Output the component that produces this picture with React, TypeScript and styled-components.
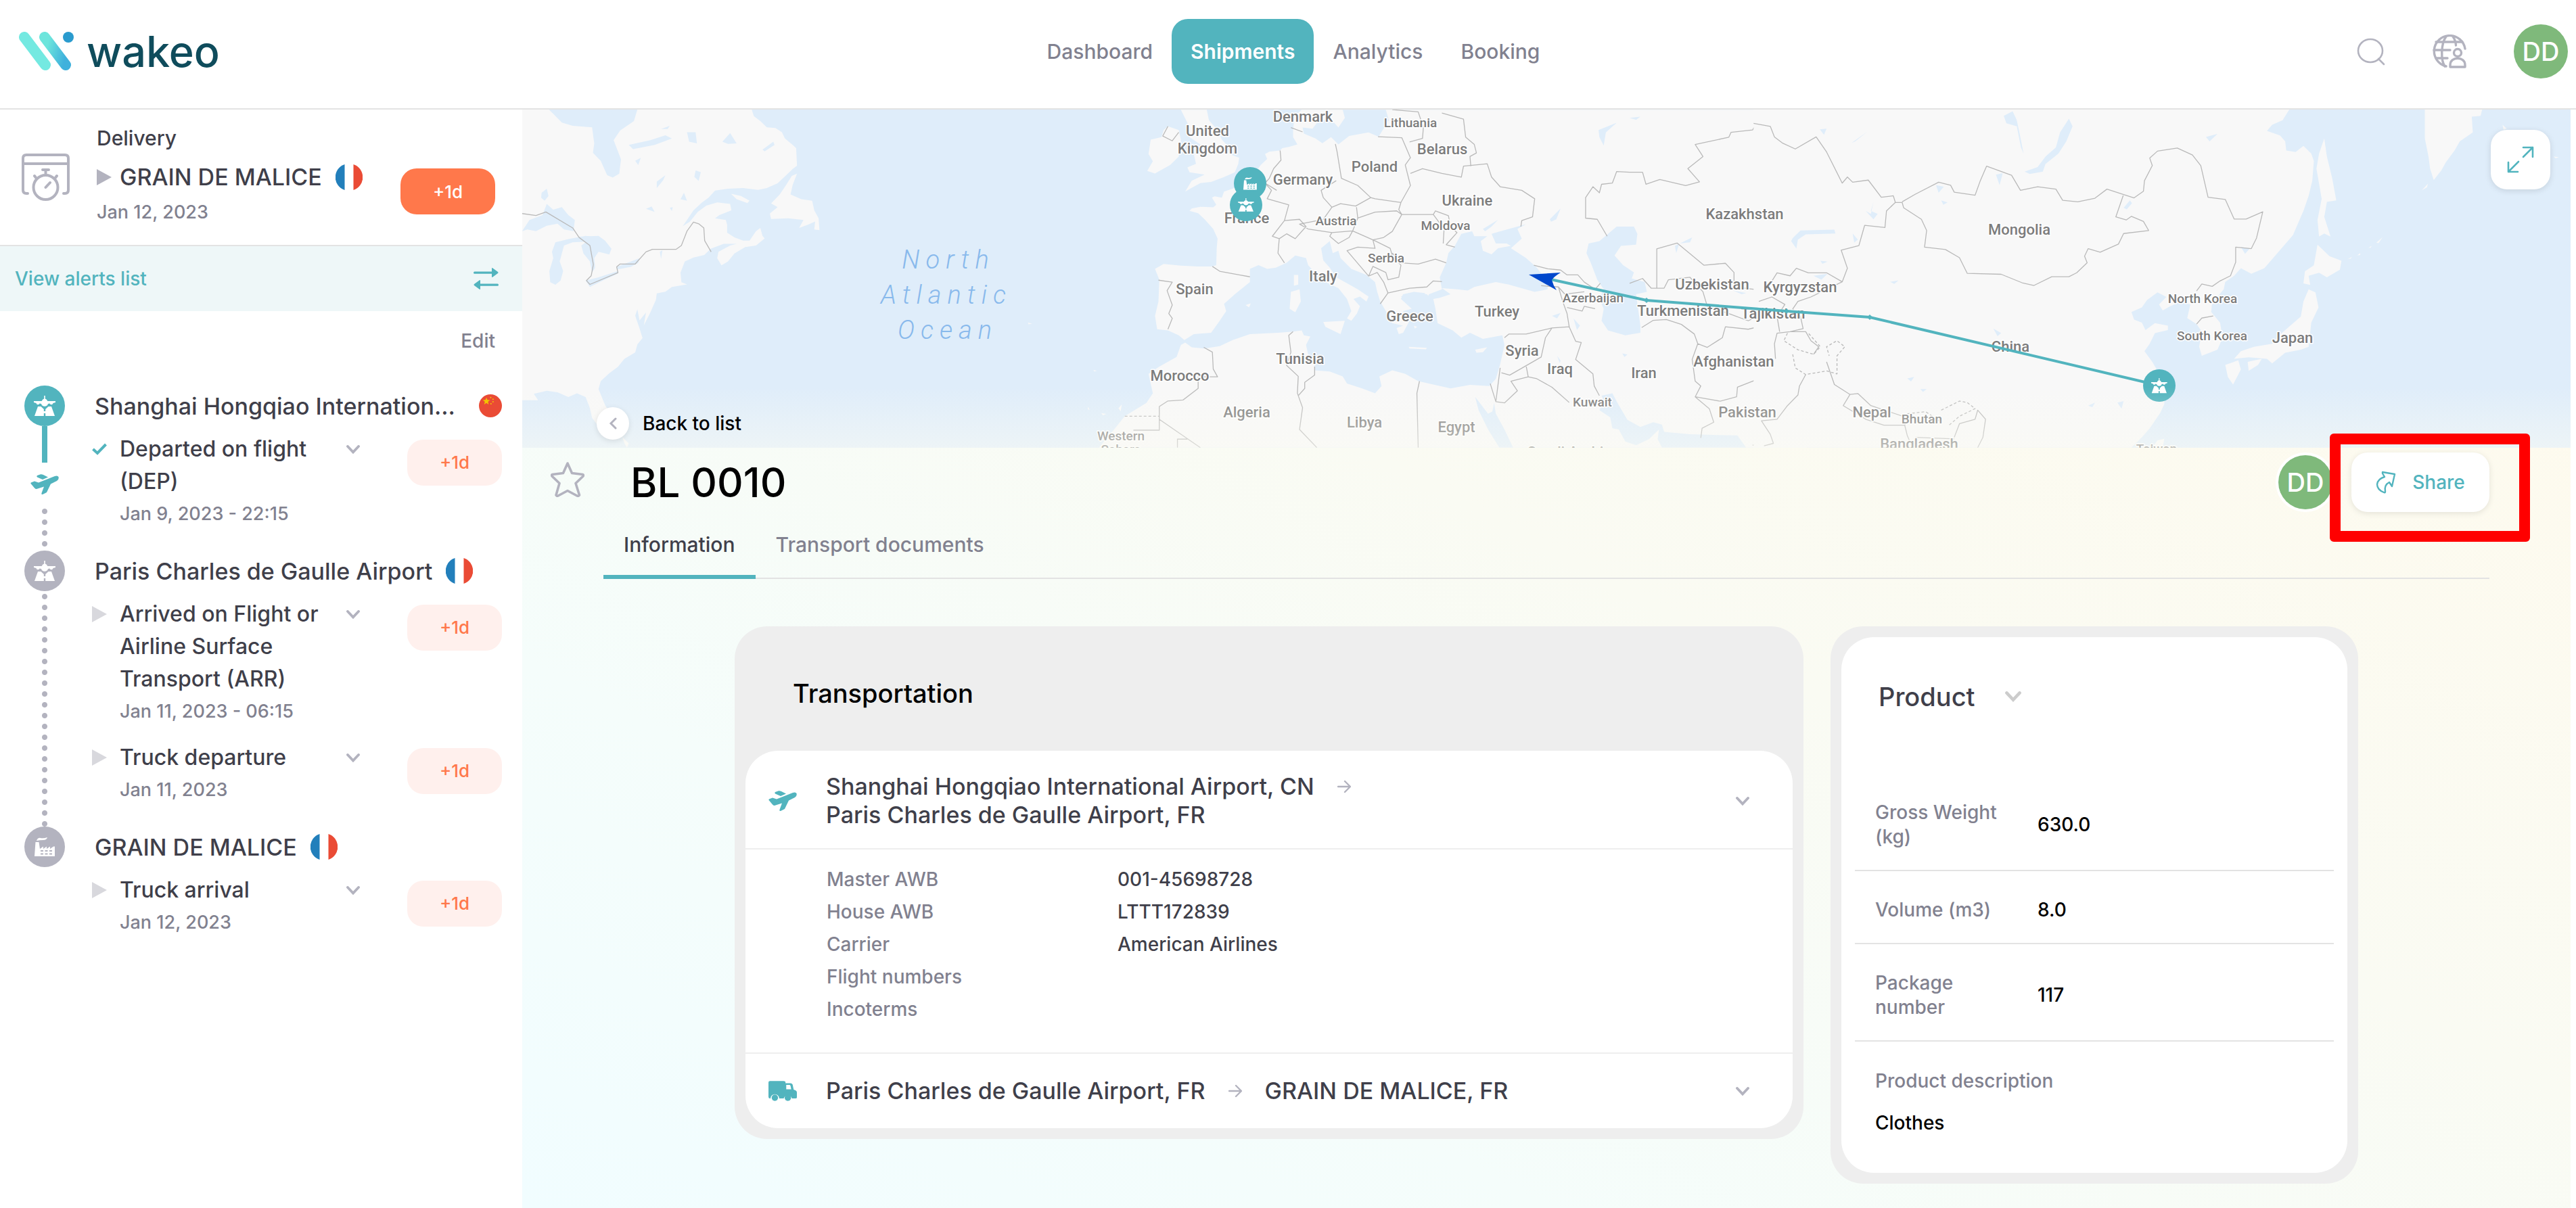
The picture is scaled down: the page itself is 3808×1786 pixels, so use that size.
import React from "react";
import styled, { createGlobalStyle, css } from "styled-components";

const teal = "#52b4be";
const ink = "#3f3f4a";
const muted = "#81818f";
const faint = "#b3b3bf";
const line = "#e3e3e3";
const orange = "#ff784b";
const font = `Inter, "Open Sans", "Liberation Sans", sans-serif`;

const GlobalStyle = createGlobalStyle`
  *, *::before, *::after { box-sizing: border-box; }
  body { margin: 0; background: #fff; color: ${ink}; font-family: ${font}; font-size: 30px; font-weight: 500; }
  button { font: inherit; color: inherit; border: 0; background: none; padding: 0; cursor: pointer; }
  a { color: inherit; text-decoration: none; }
  h1, h2, h3, p, dl, dd, dt, ol, ul { margin: 0; padding: 0; font-weight: inherit; list-style: none; }
  svg { display: block; }
`;

/* ---------- shell ---------- */

const Page = styled.div`
  min-height: 100vh;
  display: flex;
  flex-direction: column;
`;

const Header = styled.header`
  display: grid;
  grid-template-columns: 1fr auto 1fr;
  align-items: center;
  height: 162px;
  padding: 0 12px 8px 28px;
  border-bottom: 2px solid ${line};
`;

const Brand = styled.a`
  display: flex;
  align-items: center;
  gap: 18px;
  color: #0f4c5c;
  font-size: 63px;
  line-height: 64px;
`;

const Nav = styled.nav`
  display: flex;
`;

const NavLink = styled.a<{ $active?: boolean }>`
  display: flex;
  align-items: center;
  height: 96px;
  padding: 0 28px;
  border-radius: 24px;
  color: ${muted};
  ${(p) =>
    p.$active &&
    css`
      background: ${teal};
      color: #fff;
      font-weight: 600;
    `}
`;

const HeaderTools = styled.div`
  display: flex;
  justify-content: flex-end;
  align-items: center;
  gap: 70px;
`;

const Avatar = styled.span<{ $ring?: boolean }>`
  display: flex;
  flex: none;
  align-items: center;
  justify-content: center;
  width: 80px;
  height: 80px;
  border-radius: 50%;
  background: #7fb97b;
  color: #fff;
  font-size: 38px;
  box-shadow: ${(p) => (p.$ring ? "0 0 0 4px #fff" : "none")};
`;

const Body = styled.div`
  display: flex;
  flex: 1;
  padding-right: 8px;
`;

/* ---------- sidebar ---------- */

const Sidebar = styled.aside`
  flex: none;
  width: 772px;
  background: #fff;
`;

const Summary = styled.section`
  display: flex;
  align-items: center;
  height: 202px;
  padding: 0 40px 0 32px;
  border-bottom: 2px solid ${line};
`;

const SummaryText = styled.div`
  flex: 1;
  margin-left: 40px;
  padding-bottom: 12px;
  line-height: 48px;
`;

const SummaryName = styled.div`
  display: flex;
  align-items: center;
  gap: 20px;
  height: 68px;
  font-size: 34px;
`;

const SummaryPlace = styled.span`
  display: flex;
  align-items: center;
  gap: 12px;
`;

const DateText = styled.p<{ $tight?: boolean }>`
  color: ${muted};
  font-size: 27px;
  line-height: ${(p) => (p.$tight ? 36 : 48)}px;
`;

const Delay = styled.span<{ $solid?: boolean }>`
  display: flex;
  align-items: center;
  justify-content: center;
  width: 140px;
  height: 68px;
  border-radius: 24px;
  background: ${(p) => (p.$solid ? orange : "#fff0ed")};
  color: ${(p) => (p.$solid ? "#fff" : orange)};
  font-size: 26px;
`;

const SummaryDelay = styled(Delay)`
  margin-top: 42px;
`;

const Triangle = styled.span<{ $light?: boolean }>`
  flex: none;
  width: 0;
  height: 0;
  border-left: 22px solid ${(p) => (p.$light ? "#d8d8dd" : faint)};
  border-top: 12px solid transparent;
  border-bottom: 12px solid transparent;
`;

const AlertsBar = styled.button`
  display: flex;
  justify-content: space-between;
  align-items: center;
  width: 100%;
  height: 96px;
  padding: 0 35px 0 22px;
  background: #eef7f8;
  color: ${teal};
  font-size: 28px;
`;

const EditRow = styled.div`
  display: flex;
  justify-content: flex-end;
  height: 110px;
  padding: 24px 40px 0;
  color: ${muted};
  font-size: 28px;
  line-height: 40px;
`;

const EditButton = styled.button`
  height: 40px;
`;

const Stage = styled.li`
  display: grid;
  grid-template-columns: 60px minmax(0, 1fr);
  column-gap: 40px;
  padding: 0 30px 0 36px;
`;

const Rail = styled.div`
  display: flex;
  flex-direction: column;
  align-items: center;
`;

const Marker = styled.span<{ $done?: boolean }>`
  display: flex;
  flex: none;
  align-items: center;
  justify-content: center;
  width: 60px;
  height: 60px;
  border-radius: 50%;
  background: ${(p) => (p.$done ? teal : faint)};
`;

const SolidTrack = styled.span`
  width: 8px;
  height: 54px;
  background: ${teal};
`;

const RailVehicle = styled.span`
  display: flex;
  align-items: center;
  height: 64px;
`;

const DottedTrack = styled.span`
  flex: 1;
  width: 8px;
  background: radial-gradient(circle, ${faint} 3.5px, transparent 4.5px) 0 0 / 8px 16px;
`;

const StageBody = styled.div<{ $last?: boolean }>`
  padding-bottom: ${(p) => (p.$last ? 0 : 30)}px;
`;

const StageTitle = styled.h3`
  display: flex;
  align-items: center;
  gap: 20px;
  height: 60px;
  padding-left: 4px;
  font-size: 34px;
  white-space: nowrap;
`;

const StageName = styled.span<{ $truncated?: boolean }>`
  flex: none;
  min-width: ${(p) => (p.$truncated ? 548 : 0)}px;
`;

const Step = styled.div`
  display: grid;
  grid-template-columns: 22px 316px 20px 1fr;
  column-gap: 19px;
  margin-top: 10px;
  font-size: 32px;
  line-height: 48px;
  & + & {
    margin-top: 20px;
  }
`;

const StepIcon = styled.span`
  display: flex;
  align-items: center;
  height: 48px;
`;

const StepToggle = styled.button`
  display: flex;
  align-items: center;
  height: 48px;
`;

const StepDelay = styled(Delay)`
  justify-self: end;
  margin-top: 10px;
`;

/* ---------- main ---------- */

const Main = styled.main`
  display: flex;
  flex: 1;
  flex-direction: column;
  min-width: 0;
  background: linear-gradient(to top right, #f1fdff 0%, #f5fdfb 25%, #fafbf3 55%, #fffaec 100%);
`;

const MapPanel = styled.section`
  position: relative;
  height: 500px;
  overflow: hidden;
  background: #dfedfa;
`;

const MapFade = styled.div`
  position: absolute;
  inset: auto 0 0 0;
  height: 90px;
  background: linear-gradient(to bottom, rgba(251, 251, 243, 0), rgba(251, 251, 243, 0.5));
`;

const BackLink = styled.a`
  position: absolute;
  left: 110px;
  bottom: 12px;
  display: flex;
  align-items: center;
  gap: 20px;
  color: #000;
  font-size: 28px;
`;

const BackCircle = styled.span`
  display: flex;
  align-items: center;
  justify-content: center;
  width: 48px;
  height: 48px;
  border-radius: 50%;
  background: #fff;
  box-shadow: 0 2px 8px rgba(0, 0, 0, 0.1);
`;

const ExpandButton = styled.button`
  position: absolute;
  top: 30px;
  right: 30px;
  display: flex;
  align-items: center;
  justify-content: center;
  width: 88px;
  height: 88px;
  border-radius: 24px;
  background: #fff;
  box-shadow: 0 2px 10px rgba(0, 0, 0, 0.12);
`;

const TitleRow = styled.div`
  display: flex;
  align-items: center;
  height: 100px;
  padding: 2px 120px 0 42px;
`;

const FavouriteButton = styled.button`
  padding-bottom: 8px;
`;

const Title = styled.h1`
  flex: 1;
  margin-left: 68px;
  color: #000;
  font-size: 60px;
  line-height: 64px;
`;

const ShareArea = styled.div`
  position: relative;
  margin-left: 28px;
`;

const ShareButton = styled.button`
  display: flex;
  align-items: center;
  justify-content: center;
  gap: 24px;
  width: 204px;
  height: 88px;
  border-radius: 24px;
  background: #fff;
  color: ${teal};
  font-size: 28px;
  box-shadow: 0 2px 10px rgba(0, 0, 0, 0.1);
`;

const Highlight = styled.span`
  position: absolute;
  inset: -28px -60px -44px -32px;
  border: 16px solid #f00;
  border-radius: 6px;
  pointer-events: none;
`;

const Tabs = styled.nav`
  display: flex;
  margin: 0 120px;
  box-shadow: inset 0 -2px 0 ${line};
`;

const Tab = styled.a<{ $active?: boolean }>`
  height: 94px;
  padding: 23px 30px 0;
  border-bottom: 6px solid ${(p) => (p.$active ? teal : "transparent")};
  color: ${(p) => (p.$active ? ink : muted)};
  line-height: 40px;
`;

const Cards = styled.div`
  display: grid;
  grid-template-columns: 1580fr 780fr;
  gap: 40px;
  align-items: start;
  width: 100%;
  max-width: 2400px;
  margin: 70px auto 36px;
`;

const Card = styled.section`
  padding: 16px;
  border-radius: 48px;
  background: #eee;
`;

const CardTitle = styled.h2`
  height: 168px;
  padding-left: 70px;
  color: #000;
  font-size: 38px;
  line-height: 166px;
`;

const Sheet = styled.div`
  border-radius: 48px;
  background: #fff;
`;

const Leg = styled.div<{ $tall?: boolean }>`
  display: flex;
  align-items: center;
  height: ${(p) => (p.$tall ? 144 : 110)}px;
  padding: ${(p) => (p.$tall ? 4 : 0)}px 64px 0 34px;
  font-size: 34px;
  line-height: 42px;
`;

const LegRoute = styled.div`
  flex: 1;
  margin-left: 43px;
`;

const LegLine = styled.div`
  display: flex;
  align-items: center;
  gap: 34px;
`;

const Details = styled.dl`
  display: grid;
  grid-template-columns: 430px 1fr;
  padding: 20px 120px 40px;
  border-top: 2px solid #eee;
  border-bottom: 2px solid #eee;
  font-size: 28px;
  line-height: 48px;
`;

const DetailLabel = styled.dt`
  color: ${muted};
`;

const ProductSheet = styled(Sheet)`
  padding: 62px 20px 56px;
`;

const ProductToggle = styled.button`
  display: flex;
  align-items: center;
  gap: 44px;
  height: 52px;
  margin: 0 0 88px 35px;
  font-size: 38px;
`;

const ProductRow = styled.div<{ $stacked?: boolean }>`
  display: grid;
  grid-template-columns: ${(p) => (p.$stacked ? "1fr" : "200px 1fr")};
  column-gap: 40px;
  row-gap: 26px;
  align-items: center;
  padding: ${(p) => (p.$stacked ? "40px 30px 0" : "39px 30px 31px")};
  border-bottom: ${(p) => (p.$stacked ? "0" : `2px solid ${line}`)};
  font-size: 28px;
  line-height: 36px;
`;

const ProductLabel = styled.dt`
  color: ${muted};
`;

const ProductValue = styled.dd`
  color: #000;
`;

/* ---------- icons ---------- */

const Logo = () => (
  <svg width="82" height="58" viewBox="0 0 82 58" aria-hidden="true">
    <defs>
      <linearGradient id="wave" x1="0" y1="0.3" x2="1" y2="0.7">
        <stop offset="0.1" stopColor="#6de5dc" />
        <stop offset="1" stopColor="#3fb1dc" />
      </linearGradient>
    </defs>
    <path d="M8 8 L39 49" stroke="#74e9e1" strokeWidth="16" strokeLinecap="round" />
    <path d="M38 8 L69 49" stroke="url(#wave)" strokeWidth="16" strokeLinecap="round" />
    <circle cx="73" cy="8" r="8" fill="#2a9bce" />
  </svg>
);

const SearchIcon = () => (
  <svg width="42" height="42" viewBox="0 0 42 42" fill="none" stroke={faint} strokeWidth="2.6" strokeLinecap="round">
    <ellipse cx="20" cy="20" rx="18" ry="17" />
    <path d="M32 32 L40 40" />
  </svg>
);

const GlobeUserIcon = () => (
  <svg width="50" height="50" viewBox="0 0 50 50" fill="none" stroke={faint} strokeWidth="3.4" strokeLinecap="round" strokeLinejoin="round">
    <path d="M20 47 A23 23 0 1 1 48 21" />
    <path d="M18 47 C12 38 12 14 20 3 M30 3 C33 7 34 10 34.500 16 M5 11 H44 M2 23 H26 M5 35 H22" />
    <circle cx="37" cy="27" r="5.500" />
    <path d="M26 48 V45 C26 32 48 32 48 45 V48 Z" />
  </svg>
);

const ParcelTimerIcon = () => (
  <svg width="71" height="70" viewBox="0 0 71 70" fill="none" stroke={faint} strokeWidth="4" strokeLinecap="round">
    <path d="M9 59 H7 Q2 59 2 54 V7 Q2 2 7 2 H64 Q69 2 69 7 V54 Q69 59 64 59 H62 M2 15 H69" />
    <circle cx="35.500" cy="50" r="18" />
    <path d="M35.500 31 V24 M31 24 H40 M19 33 L22 37 M52 33 L49 37 M35.500 50 L42 43" />
  </svg>
);

const SwapIcon = () => (
  <svg width="37" height="32" viewBox="0 0 37 32" fill={teal}>
    <path d="M1.500 5.500 H27 V1 Q27 -0.500 28.500 0.500 L36 6 Q37 7 36 8 L28.500 13.500 Q27 14.500 27 13 V8.800 H1.500 Q0 8.800 0 7.200 Q0 5.500 1.500 5.500Z" />
    <path d="M35.500 23.500 H10 V19 Q10 17.500 8.500 18.500 L1 24 Q0 25 1 26 L8.500 31.500 Q10 32.500 10 31 V26.800 H35.500 Q37 26.800 37 25.200 Q37 23.500 35.500 23.500Z" />
  </svg>
);

const Chevron = ({ size = 20, color = faint }: { size?: number; color?: string }) => (
  <svg width={size} height={size * 0.65} viewBox="0 0 20 13" fill="none" stroke={color} strokeWidth="3.800" strokeLinecap="round">
    <path d="M2 2 L10 10.500 L18 2" />
  </svg>
);

const Check = () => (
  <svg width="22" height="18" viewBox="0 0 22 18" fill="none" stroke={teal} strokeWidth="4">
    <path d="M1.500 9 L8 15 L20.500 2" />
  </svg>
);

const LegArrow = () => (
  <svg width="20" height="20" viewBox="0 0 20 20" fill="none" stroke={faint} strokeWidth="2.400" strokeLinecap="round" strokeLinejoin="round">
    <path d="M1 10 H19 M11 2 L19 10 L11 18" />
  </svg>
);

const airportShape = (
  <>
    <path d="M15.200 0 h1.600 v4.500 a6 6 0 0 1 3.500 3.500 H32 v2 l-3.500 1 a2.600 2.600 0 0 1 -5 0.600 l-2.500 .4 a5.200 5.200 0 0 1 -10 0 l-2.500 -.4 a2.600 2.600 0 0 1 -5 -.6 L0 10 V8 h11.700 a6 6 0 0 1 3.500 -3.500z" />
    <path d="M6 16 h4.500 l4.300 4 v3 h2.400 v-3 l4.300 -4 H26 L31 30 H17.200 v-4 h-2.400 v4 H1z" />
  </>
);

const factoryShape = (
  <>
    <path d="M3 5 Q5 0 9 1 T19 0 Q18 4 13 4 T3 5z" />
    <path fillRule="evenodd" d="M1.500 7 h5 L8 17 l5 -3.500 v3.500 l5 -3.500 v3.500 l5 -3.500 v3.500 l5 -3.500 H30 V28 H0z M9 19 h4 v2 h-4z M15.500 19 h4 v2 h-4z M22 19 h4 v2 h-4z M9 23.500 h4 v2 h-4z M15.500 23.500 h4 v2 h-4z M22 23.500 h4 v2 h-4z" />
  </>
);

const AirportIcon = () => (
  <svg width="32" height="30" viewBox="0 0 32 30" fill="#fff">{airportShape}</svg>
);

const FactoryIcon = () => (
  <svg width="30" height="28" viewBox="0 0 30 28" fill="#fff">{factoryShape}</svg>
);

const PlaneIcon = () => (
  <svg width="42" height="30" viewBox="0 0 42 30" fill={teal}>
    <path d="M0.500 14 Q0 12.500 2 12 L6 10.500 L12 12.500 L36 3 Q40 1.500 41.500 4 Q42.500 8 39 10 L30 14.500 L24 27 L18 30 Q16 30.500 16.500 28 L20 18.500 L9 22 Q7.500 22 6 20.500z" />
    <path d="M10 2 L15 0.300 Q17 0 19 1 L26 4.500 L18 8 L10 4.500 Q8.500 3 10 2z" />
  </svg>
);

const TruckIcon = () => (
  <svg width="42" height="30" viewBox="0 0 40 28" fill={teal}>
    <path fillRule="evenodd" d="M2 0 H21 Q24 0 24 2 V3 H31 Q33 3 34 5 L35.500 12 L38 13 Q40 14 40 16 V23 Q40 24.500 38 24.500 H33 A6 6 0 0 0 21.500 24.500 H15 A6 6 0 0 0 3 24.500 H2 Q0 24.500 0 22 V2 Q0 0 2 0z M25 5.500 V11.500 H32 L31 6.500 Q30.500 5.500 29.500 5.500z" />
    <circle cx="9" cy="23.500" r="4.500" />
    <circle cx="27.300" cy="23.500" r="4.500" />
  </svg>
);

const StarIcon = () => (
  <svg width="50" height="52" viewBox="0 0 50 52" fill="none" stroke={faint} strokeWidth="3.600" strokeLinejoin="round">
    <path d="M25 2 L31.500 16.500 L47.500 18.500 Q49 19.500 48 21 L37 31.500 L42.500 49 Q41 51 39 50 L25 42.500 L11 50 Q9 51 8 49 L13 31.500 L2 21 Q1 19 2.500 18.500 L18.500 16.500Z" />
  </svg>
);

const BackIcon = () => (
  <svg width="12" height="18" viewBox="0 0 12 18" fill="none" stroke={faint} strokeWidth="3" strokeLinecap="round">
    <path d="M10 2 L3 9 L10 16" />
  </svg>
);

const ExpandIcon = () => (
  <svg width="40" height="40" viewBox="0 0 40 40" fill="none" stroke={teal} strokeWidth="2.600" strokeLinecap="round" strokeLinejoin="round">
    <path d="M24 2 H38 V16 M38 2 L24 16 M2 24 V38 H16 M2 38 L17 23" />
  </svg>
);

const ShareIcon = () => (
  <svg width="30" height="34" viewBox="0 0 30 34" fill="none" stroke={teal} strokeWidth="2.400" strokeLinejoin="round">
    <path d="M10 2 L28 5 L24 23 L20 17 Q12 21 14 31 Q14 33 12 32 Q2 28 2 20 Q3 12 13 9 L10 4z" />
  </svg>
);

const Flag = ({ country }: { country: "fr" | "cn" }) => (
  <svg width="40" height="40" viewBox="0 0 40 40" role="img" aria-label={country === "fr" ? "France" : "China"}>
    {country === "fr" ? (
      <>
        <path d="M13.500 1 A20 20 0 0 0 13.500 39z" fill="#227fbb" />
        <path d="M26.500 1 A20 20 0 0 1 26.500 39z" fill="#ea4b35" />
      </>
    ) : (
      <>
        <circle cx="20" cy="20" r="20" fill="#ea4b35" />
        <path d="M13 5.500 l1.700 4.300 4.600 .3 -3.600 2.900 1.200 4.500 -3.900 -2.500 -3.900 2.500 1.200 -4.500 -3.600 -2.900 4.600 -.3z" fill="#f2c500" />
        <g fill="#f2c500">
          <circle cx="20.500" cy="5.500" r="1.200" />
          <circle cx="24.500" cy="8.500" r="1.200" />
          <circle cx="24.500" cy="13" r="1.200" />
          <circle cx="21" cy="16.500" r="1.200" />
        </g>
      </>
    )}
  </svg>
);

/* ---------- map ---------- */

const MapSvg = styled.svg`
  width: 100%;
  height: 100%;
  .land { fill: #f8f8f8; }
  .lake { fill: #dfedfa; }
  .border { fill: none; stroke: #b9b9b9; stroke-width: 1.3; vector-effect: non-scaling-stroke; stroke-linejoin: round; }
  .dashed { stroke-dasharray: 4 3; }
`;

const MapLabel = styled.text<{ $small?: boolean }>`
  font-family: Roboto, "Liberation Sans", sans-serif;
  font-size: ${(p) => (p.$small ? 19 : 22)}px;
  font-weight: 500;
  fill: #7c7c7c;
  stroke: #fff;
  stroke-width: 3px;
  stroke-linejoin: round;
  paint-order: stroke;
  text-anchor: middle;
  dominant-baseline: central;
`;

const OceanLabel = styled.text`
  font-family: Roboto, "Liberation Sans", sans-serif;
  font-size: 38px;
  font-style: italic;
  font-weight: 300;
  letter-spacing: 9px;
  fill: #88b9ec;
  text-anchor: middle;
  dominant-baseline: central;
`;

type Place = [string, number, number];

const places: Place[] = [
  ["Denmark", 1926, 172], ["United", 1785, 193], ["Kingdom", 1785, 219], ["Belarus", 2132, 220],
  ["Poland", 2032, 246], ["Germany", 1926, 265], ["Ukraine", 2169, 296], ["France", 1843, 322],
  ["Italy", 1956, 408], ["Spain", 1766, 427], ["Greece", 2084, 467], ["Turkey", 2213, 460],
  ["Turkmenistan", 2488, 459], ["Uzbekistan", 2531, 420], ["Kazakhstan", 2579, 316], ["Syria", 2250, 518],
  ["Iraq", 2306, 545], ["Iran", 2430, 551], ["Afghanistan", 2563, 534], ["Tunisia", 1922, 530],
  ["Morocco", 1744, 555], ["Algeria", 1843, 609], ["Libya", 2017, 624], ["Egypt", 2153, 631],
  ["Pakistan", 2583, 609], ["Saudi Arabia", 2320, 668], ["Kyrgyzstan", 2661, 424], ["Tajikistan", 2621, 463],
  ["Mongolia", 2985, 339], ["China", 2972, 512], ["Japan", 3389, 499], ["Nepal", 2767, 609],
  ["Bangladesh", 2837, 656],
];

const smallPlaces: Place[] = [
  ["Lithuania", 2085, 181], ["Austria", 1975, 326], ["Moldova", 2137, 333], ["Serbia", 2049, 381],
  ["Azerbaijan", 2355, 440], ["Kuwait", 2354, 594], ["Western", 1657, 644], ["Sahara", 1657, 664],
  ["North Korea", 3256, 441], ["South Korea", 3270, 496], ["Bhutan", 2841, 619], ["Taiwan", 3188, 663],
];

const americaLand =
  "M3 4 L65 4 95 45 120 55 165 60 170 110 167 140 185 165 200 210 213 217 228 205 232 160 215 100 230 70 262 40 270 4 535 4 540 25 555 40 570 60 590 62 605 75 612 95 630 115 638 125 640 180 630 190 615 210 595 235 570 250 550 256 515 250 480 252 450 258 435 280 420 295 400 320 385 350 375 370 392 355 410 325 430 305 455 295 485 300 488 320 460 335 450 345 475 350 478 365 478 390 495 405 515 415 530 415 545 385 555 375 560 400 565 408 545 430 520 435 495 455 480 480 465 492 455 470 458 450 485 430 500 425 470 425 440 440 425 460 400 468 380 480 370 515 372 545 385 552 350 560 335 575 315 580 313 600 300 640 285 680 290 640 275 665 270 630 265 650 275 690 282 720 270 740 265 765 240 785 225 810 205 830 185 855 180 880 195 930 215 975 210 1010 190 1015 165 970 160 940 150 905 130 893 110 905 85 890 60 885 30 895 40 915 3 915Z M640 205 L630 240 625 270 650 285 675 290 680 320 690 345 692 382 680 380 682 355 665 365 645 375 655 350 620 345 580 347 577 330 595 310 580 298 600 270 615 240 628 212Z M487 268 L510 275 530 290 525 297 500 285Z M235 1030 L250 1050 246 1063 240 1050Z M1175 672 l10 3 -8 2z M1327 820 l8 3 -6 2z M1345 955 l12 3 -8 4z M1385 940 l8 -12 -3 22z M1315 935 l3 10 -4 -2z";

const americaLakes =
  "M3 385 L20 350 50 335 60 300 75 318 95 310 110 335 125 350 122 385 100 380 85 362 60 368 35 385 15 380Z M80 420 L110 410 150 400 180 405 150 418 120 420 100 430 95 455 90 480 98 510 92 540 80 553 68 545 66 510 75 470 72 450Z M135 402 L180 400 195 415 210 440 205 458 180 450 170 470 172 500 165 515 160 480 145 455 140 430 150 420 130 410Z M150 540 L180 530 225 510 225 518 190 540 160 560Z M222 497 L240 488 275 470 272 485 255 497 225 505Z M250 115 L300 100 335 85 350 95 310 115 260 128Z M385 75 L405 75 408 110 390 105Z M467 105 L485 78 500 110 480 112Z M560 130 L585 105 588 115 565 135Z M405 195 L417 200 412 228 402 215Z M315 230 L335 210 330 225 315 250Z M48 265 L60 252 64 275 55 290 47 280Z M370 285 L378 265 385 290Z M290 315 L303 308 310 325Z M265 165 L278 155 272 178Z M325 65 L345 55 340 65Z M322 450 L328 445 325 472Z M345 312 L352 310 350 322Z M208 8 L222 4 216 25Z";

const americaBorders =
  "M3 330 L35 336 58 325 120 375 135 405 160 430 168 490 163 525 152 540 160 552 225 515 222 497 230 488 265 488 290 450 305 442 360 442 372 430 385 385 400 357 412 362 424 375 426 415 441 450";

const europeLand =
  "M430 6 L415 30 412 60 410 90 410 120 420 150 400 160 385 165 380 175 355 180 345 190 350 210 335 235 325 260 305 280 285 300 275 330 250 345 245 370 228 365 222 370 232 400 225 410 195 408 175 415 170 425 190 435 205 460 225 500 235 540 233 580 232 650 223 655 190 655 150 652 110 645 90 665 100 710 98 800 90 860 95 915 120 920 145 940 158 960 180 935 220 930 240 880 255 840 250 810 275 770 310 720 310 665 330 650 350 665 370 660 395 640 415 610 440 620 445 650 460 680 485 720 515 745 535 790 545 840 535 870 545 880 558 850 565 820 550 790 565 780 580 800 585 780 560 750 530 720 510 700 495 660 480 630 475 580 495 550 502 600 515 590 520 620 545 665 580 690 600 720 605 760 612 800 625 840 640 890 665 900 650 910 655 935 665 930 680 880 665 840 685 830 660 790 665 770 690 760 715 765 720 790 725 770 755 750 750 700 765 640 770 600 785 570 800 520 825 510 830 530 860 530 845 550 850 590 870 605 885 580 915 570 905 560 880 560 870 520 890 510 950 480 930 500 940 540 915 580 950 620 975 660 1000 720 1000 750 970 760 910 730 880 720 830 740 815 755 790 750 755 745 775 770 750 785 735 790 740 830 745 890 780 920 800 950 820 930 850 955 895 940 900 980 890 1060 880 1120 865 1150 820 1145 775 1160 700 1130 670 1100 640 1085 610 1110 615 1150 600 1180 570 1160 535 1140 525 1110 495 1090 460 1085 460 1060 445 1020 440 980 450 945 435 940 430 920 410 925 375 930 310 935 270 960 240 985 205 995 175 990 160 970 150 980 140 1030 100 1070 75 1100 85 1180 70 1220 20 1275 0 1320 -40 1405 1600 1405 1600 6Z M150 6 L210 6 215 50 235 90 245 130 255 150 262 190 285 205 283 230 275 265 250 285 220 305 195 310 175 330 160 345 175 300 205 275 170 265 165 245 185 230 180 190 200 190 195 150 170 120 165 60Z M120 75 L145 90 150 130 145 200 125 235 90 270 72 260 85 220 75 190 80 130 105 120 110 90Z M405 760 L425 750 428 800 415 845 402 830Z M412 690 L422 690 422 730 412 735Z M480 885 L530 880 520 935 485 905Z M678 988 L720 992 718 998 680 995Z M832 1000 L860 990 850 1010 835 1012Z M300 815 L312 808 308 825Z M690 900 L698 905 692 912Z";

const europeWater =
  "M525 6 L625 6 632 50 608 118 585 100 540 115 515 150 498 120 478 145 462 125 435 105 432 80 455 85 470 50 500 50 515 80 530 40Z M1140 520 L1160 490 1200 490 1208 520 1205 565 1170 570 1155 610 1175 650 1200 680 1195 705 1225 720 1230 760 1205 770 1215 900 1215 930 1180 940 1140 920 1125 880 1130 830 1120 790 1130 750 1115 710 1100 640 1090 600 1095 560 1120 550Z M832 1195 L862 1265 872 1255 876 1220 880 1265 900 1330 920 1405 888 1405 862 1330 840 1250Z M1125 1190 L1150 1180 1165 1230 1185 1290 1215 1320 1245 1300 1265 1310 1270 1340 1330 1350 1440 1355 1460 1405 1265 1405 1255 1370 1258 1330 1235 1370 1205 1395 1180 1380 1165 1330 1150 1325 1145 1280 1120 1250 1130 1210Z M1118 90 L1160 60 1135 100 1130 155 1120 120Z M1295 570 L1335 535 1330 555 1305 560 1298 600Z M1005 460 L1030 415 1020 460 1008 470Z M1190 40 L1215 35 1205 48Z M1480 325 L1490 312 1488 340Z M1060 870 L1075 900 1068 918Z M1010 860 L1030 848 1022 870Z M850 500 L885 462 870 490 855 510Z M1430 755 L1460 765 1450 770Z M1173 1015 L1185 1020 1178 1030Z M1022 1025 L1030 1045 1028 1055Z M660 780 L680 765 720 770 730 790 700 800 712 830 690 820Z";

const europeBorders =
  "M223 655 L240 675 285 690 310 698 M98 712 L130 720 118 755 130 815 122 850 130 870 120 915 M345 310 L360 340 350 375 400 400 390 465 362 530 378 540 375 600 390 640 M390 465 L425 460 440 490 415 540 395 520 378 540 M380 175 L382 215 365 250 355 290 345 310 372 340 M508 148 L512 180 522 290 560 320 590 370 M607 118 L662 122 682 205 670 235 682 320 660 390 600 375 590 370 555 405 520 395 500 410 480 370 475 340 510 300 M500 410 L480 460 425 480 445 500 500 515 548 508 560 455 557 410 M560 455 L600 430 650 425 662 440 640 510 620 535 595 545 548 508 M660 390 L655 420 662 440 735 440 740 425 770 445 775 490 790 515 765 565 785 575 M735 440 L760 500 758 560 M640 600 L660 640 700 645 740 625 765 640 M595 545 L635 580 640 610 660 650 655 700 630 710 625 680 595 655 585 695 535 590 560 575 600 580 595 545 M500 515 L495 530 515 560 540 535 548 508 M612 810 L630 765 680 745 720 740 735 715 755 718 M585 695 L605 680 620 720 630 765 M682 270 L710 250 755 270 800 285 805 240 860 230 870 285 890 325 940 340 970 375 965 450 940 465 938 490 M640 6 L700 15 712 80 710 125 680 140 M755 20 L805 45 810 120 830 150 835 185 820 200 822 240 M405 80 L432 98 M1138 530 L1115 460 1088 455 1088 370 1105 325 1120 350 1125 315 1150 310 1160 262 1190 265 1220 265 1228 315 1260 295 1320 320 1352 305 1325 250 1360 200 1342 150 1420 120 1425 100 1475 90 1485 62 1525 80 1530 130 1568 140 M1253 745 L1253 582 1300 558 1362 650 1412 642 1432 680 1432 740 1480 750 1495 720 1568 680 M1190 725 L1220 705 1240 745 1270 745 1280 710 1330 700 1360 760 1370 820 1420 850 1465 880 1500 850 M968 650 L1000 665 1030 670 1045 690 1070 690 1085 720 1110 750 1122 725 M985 735 L1025 740 1040 770 1085 760 M1025 740 L1035 800 1045 850 1050 905 1010 910 950 935 910 935 900 950 M1045 825 L1080 840 1085 820 1110 830 M1050 905 L1065 965 1078 970 1065 1040 1105 1100 1108 1150 1120 1190 M1010 910 L995 950 985 1030 912 1105 893 1095 M950 1065 L955 1112 915 1130 930 1170 900 1220 880 1215 867 1140 M880 1215 L890 1075 M955 1112 L975 1120 1010 1155 1050 1218 M1218 908 L1245 878 1275 875 1310 895 1340 935 1348 975 1335 1040 1342 1130 1355 1150 1342 1195 1400 1213 1438 1195 1440 1155 1490 1120 1500 1060 1530 1000 1525 950 1545 930 M1348 975 L1370 990 1405 950 1412 905 1465 915 1500 900 1530 880 M1342 1195 L1375 1245 1385 1300 1358 1325 1355 1365 M1568 1200 L1545 1260 1520 1300 1523 1390 1475 1395 M703 1130 L697 1180 700 1405 M410 925 L400 940 405 1010 395 1065 422 1110 420 1180 432 1240 425 1330 465 1405 M460 1070 L460 1105 437 1135 437 1160 422 1190 M203 990 L223 1010 225 1080 235 1112 190 1112 190 1160 155 1208 120 1212 100 1235 100 1333 40 1333 M100 1288 L195 1405 M142 1405 L142 1370 165 1370 M120 75 L108 115 130 135 145 100";

const asiaLand =
  "M-10 4 L1018 4 1005 40 985 55 975 75 1000 90 1010 110 1012 140 1030 145 1045 125 1060 150 1065 175 1062 240 1055 290 1045 340 1025 420 990 490 970 530 945 548 925 530 912 555 895 575 892 600 880 625 870 640 868 675 885 710 890 760 880 800 850 820 845 790 850 740 840 715 822 695 828 650 810 640 790 655 775 670 768 650 782 625 765 610 745 635 735 660 715 675 720 700 735 710 742 735 760 712 785 720 785 735 760 745 750 780 740 805 755 840 765 870 780 905 778 980 770 1010 750 1060 735 1090 715 1124 -10 1124Z M1278 4 L1388 4 1385 25 1368 28 1370 80 1345 110 1335 140 1318 180 1310 205 1295 238 1288 200 1285 160 1278 100Z M1085 100 L1090 160 1100 230 1108 305 1090 310 1085 360 1097 425 1085 415 1075 425 1072 370 1080 300 1075 250 1070 200 1075 150Z M1072 452 L1095 490 1118 505 1115 535 1090 560 1075 545 1055 555 1058 585 1045 580 1048 540 1065 520Z M1055 600 L1068 610 1074 660 1060 710 1055 790 1040 800 1010 810 985 845 975 830 940 825 912 830 925 805 950 790 985 780 1000 750 1040 690 1045 640Z M938 840 L965 830 958 850 940 870Z M895 850 L920 835 925 865 910 915 900 890Z M765 1100 L778 1095 775 1124 755 1124Z M1130 500 l8 -8 -2 6z M1148 488 l6 -8 0 6z M1185 445 l12 -18 -8 20z M1170 462 l6 -6 -2 6z M1272 272 l12 -22 -2 12z M1427 55 l8 12 -6 4z M1525 160 l10 2 -6 4z";

const asiaLakes =
  "M595 35 L602 60 590 110 575 150 550 185 545 210 520 218 510 210 535 195 550 160 570 130 578 80Z M487 10 L495 40 500 80 508 150 503 130 495 60 475 50 470 25Z M65 430 L80 405 145 402 147 415 90 418 75 435 72 465 62 440Z M858 95 L880 85 865 110Z M455 220 L468 215 462 255Z M340 255 L355 260 345 280Z M205 340 L215 350 220 310 215 340 228 350 220 368Z M105 555 L132 548 120 568Z M117 70 L130 68 125 88Z M178 115 L208 78 185 110Z M450 730 L465 745 458 755Z M700 330 L712 305 716 315 706 335Z M180 415 L190 435 183 445Z M925 460 L942 465 933 482Z M252 575 L268 570 260 582Z M285 895 L298 890 292 905Z M688 975 L700 970 696 995Z M118 505 L132 508 122 515Z M310 930 L322 930 315 940Z M350 305 L362 312 354 320Z M632 985 L645 975 640 990Z";

const asiaBorders =
  "M-10 50 L22 60 30 95 45 115 70 135 110 95 130 145 160 248 170 228 180 245 210 238 235 295 258 290 262 312 275 312 M275 310 L300 285 345 245 368 255 375 278 415 288 425 240 437 192 485 222 502 272 535 260 570 268 583 305 612 310 645 298 668 268 720 297 738 275 740 240 755 190 750 165 765 142 803 132 832 155 848 190 862 295 895 302 912 367 935 367 967 343 955 430 945 465 915 460 915 510 905 555 885 572 870 590 850 582 840 605 M275 312 L278 330 312 368 322 405 318 460 358 468 385 495 400 547 465 550 505 578 528 587 562 558 595 558 610 545 630 512 625 490 632 465 655 477 690 450 700 415 748 405 738 375 715 358 705 370 685 360 700 285 M262 312 L245 340 242 395 203 388 192 455 158 470 170 530 160 575 130 545 95 545 72 530 60 555 35 545 15 600 M160 575 L130 600 100 625 75 640 65 665 80 690 85 730 60 740 35 745 30 780 32 830 M0 640 L25 625 50 650 35 690 40 740 M60 740 L90 740 100 770 115 790 105 815 M90 882 L78 920 75 950 55 985 35 1030 5 1035 22 1080 28 1110 10 1118 M130 840 L145 915 175 948 162 985 205 1030 240 1050 280 1050 285 1025 262 1012 215 985 190 945 175 948 M280 1050 L285 1085 295 1124 M375 1090 L385 1045 415 1030 420 1000 435 1030 430 1090 420 1124 M300 1090 L375 1095 M840 715 L850 695 872 688";

const asiaDisputed =
  "M55 745 L48 770 75 800 105 815 118 790 95 745 M65 815 L70 860 90 882 130 870 150 880 150 820 165 790 150 770 130 790 135 820 M350 1000 L385 970 400 975 415 995 385 1020 365 1050 M285 1012 L320 1005 350 1040";

const WorldMap = () => (
  <MapSvg viewBox="772 162 3028 500" preserveAspectRatio="xMidYMid slice" role="img" aria-label="Shipment route map">
    <g transform="translate(770 160) scale(0.6378 0.4719)">
      <path className="land" d={americaLand} />
      <path className="lake" d={americaLakes} />
      <path className="border" d={americaBorders} />
    </g>
    <g transform="translate(1650 160) scale(0.6378 0.3571)">
      <path className="land" d={europeLand} />
      <path className="lake" d={europeWater} />
      <path className="border" d={europeBorders} />
      <path className="border dashed" d="M20 1275 H100" />
    </g>
    <g transform="translate(2600 160) scale(0.7704 0.4464)">
      <path className="land" d={asiaLand} />
      <path className="lake" d={asiaLakes} />
      <path className="border" d={asiaBorders} />
      <path className="border dashed" d={asiaDisputed} />
    </g>

    <OceanLabel x="1402" y="384">North</OceanLabel>
    <OceanLabel x="1399" y="436">Atlantic</OceanLabel>
    <OceanLabel x="1401" y="488">Ocean</OceanLabel>
    {places.map(([name, x, y]) => (
      <MapLabel key={name} x={x} y={y}>{name}</MapLabel>
    ))}
    {smallPlaces.map(([name, x, y]) => (
      <MapLabel key={name} x={x} y={y} $small>{name}</MapLabel>
    ))}

    <path d="M2292 413 L2434 444 L2641 460 L2764 469 L3192 570" fill="none" stroke={teal} strokeWidth="4" />
    <g fill={teal}>
      <path d="M2434 440 l4 4 -4 4 -4 -4z M2641 456 l4 4 -4 4 -4 -4z M2764 465 l4 4 -4 4 -4 -4z" />
      <circle cx="1848" cy="271" r="24" />
      <circle cx="1842" cy="303" r="24" />
      <circle cx="3192" cy="570" r="24" />
    </g>
    <path d="M2260 406 L2307 403 Q2297 409 2294 414 Q2296 422 2301 429z" fill="#0047cc" />
    <g fill="#fff">
      <g transform="translate(1838 262) scale(0.66)">{factoryShape}</g>
      <g transform="translate(1830 293) scale(0.74 0.66)">{airportShape}</g>
      <g transform="translate(3180 559) scale(0.74)">{airportShape}</g>
    </g>
  </MapSvg>
);

/* ---------- data ---------- */

type StepData = { label: string; date: string; done?: boolean };
type StageData = { name: string; flag: "fr" | "cn"; place: "airport" | "factory"; current?: boolean; truncated?: boolean; steps: StepData[] };

const stages: StageData[] = [
  {
    name: "Shanghai Hongqiao Internation...",
    flag: "cn",
    place: "airport",
    current: true,
    truncated: true,
    steps: [{ label: "Departed on flight (DEP)", date: "Jan 9, 2023 - 22:15", done: true }],
  },
  {
    name: "Paris Charles de Gaulle Airport",
    flag: "fr",
    place: "airport",
    steps: [
      { label: "Arrived on Flight or Airline Surface Transport (ARR)", date: "Jan 11, 2023 - 06:15" },
      { label: "Truck departure", date: "Jan 11, 2023" },
    ],
  },
  {
    name: "GRAIN DE MALICE",
    flag: "fr",
    place: "factory",
    steps: [{ label: "Truck arrival", date: "Jan 12, 2023" }],
  },
];

const waybill: [string, string][] = [
  ["Master AWB", "001-45698728"],
  ["House AWB", "LTTT172839"],
  ["Carrier", "American Airlines"],
  ["Flight numbers", "\u00a0"],
  ["Incoterms", "\u00a0"],
];

const product: [string, string][] = [
  ["Gross Weight (kg)", "630.0"],
  ["Volume (m3)", "8.0"],
  ["Package number", "117"],
];

/* ---------- page ---------- */

export default function App() {
  return (
    <Page>
      <GlobalStyle />
      <Header>
        <Brand href="#home">
          <Logo />
          wakeo
        </Brand>
        <Nav>
          <NavLink href="#dashboard">Dashboard</NavLink>
          <NavLink href="#shipments" $active>Shipments</NavLink>
          <NavLink href="#analytics">Analytics</NavLink>
          <NavLink href="#booking">Booking</NavLink>
        </Nav>
        <HeaderTools>
          <button type="button" aria-label="Search"><SearchIcon /></button>
          <button type="button" aria-label="Language"><GlobeUserIcon /></button>
          <Avatar>DD</Avatar>
        </HeaderTools>
      </Header>

      <Body>
        <Sidebar>
          <Summary>
            <ParcelTimerIcon />
            <SummaryText>
              <p>Delivery</p>
              <SummaryName>
                <SummaryPlace>
                  <Triangle />
                  GRAIN DE MALICE
                </SummaryPlace>
                <Flag country="fr" />
              </SummaryName>
              <DateText $tight>Jan 12, 2023</DateText>
            </SummaryText>
            <SummaryDelay $solid>+1d</SummaryDelay>
          </Summary>
          <AlertsBar type="button">
            View alerts list
            <SwapIcon />
          </AlertsBar>
          <EditRow>
            <EditButton type="button">Edit</EditButton>
          </EditRow>
          <ol>
            {stages.map((stage, i) => (
              <Stage key={stage.name}>
                <Rail>
                  <Marker $done={stage.current}>
                    {stage.place === "airport" ? <AirportIcon /> : <FactoryIcon />}
                  </Marker>
                  {stage.current && (
                    <>
                      <SolidTrack />
                      <RailVehicle><PlaneIcon /></RailVehicle>
                    </>
                  )}
                  {i < stages.length - 1 && <DottedTrack />}
                </Rail>
                <StageBody $last={i === stages.length - 1}>
                  <StageTitle>
                    <StageName $truncated={stage.truncated}>{stage.name}</StageName>
                    <Flag country={stage.flag} />
                  </StageTitle>
                  {stage.steps.map((step) => (
                    <Step key={step.label}>
                      <StepIcon>{step.done ? <Check /> : <Triangle $light />}</StepIcon>
                      <div>
                        <p>{step.label}</p>
                        <DateText>{step.date}</DateText>
                      </div>
                      <StepToggle type="button" aria-label={`Show ${step.label}`}><Chevron /></StepToggle>
                      <StepDelay>+1d</StepDelay>
                    </Step>
                  ))}
                </StageBody>
              </Stage>
            ))}
          </ol>
        </Sidebar>

        <Main>
          <MapPanel>
            <WorldMap />
            <MapFade />
            <BackLink href="#list">
              <BackCircle><BackIcon /></BackCircle>
              Back to list
            </BackLink>
            <ExpandButton type="button" aria-label="Expand map"><ExpandIcon /></ExpandButton>
          </MapPanel>

          <TitleRow>
            <FavouriteButton type="button" aria-label="Add to favourites"><StarIcon /></FavouriteButton>
            <Title>BL 0010</Title>
            <Avatar $ring>DD</Avatar>
            <ShareArea>
              <ShareButton type="button">
                <ShareIcon />
                Share
              </ShareButton>
              <Highlight />
            </ShareArea>
          </TitleRow>

          <Tabs>
            <Tab href="#information" $active>Information</Tab>
            <Tab href="#documents">Transport documents</Tab>
          </Tabs>

          <Cards>
            <Card>
              <CardTitle>Transportation</CardTitle>
              <Sheet>
                <Leg $tall>
                  <PlaneIcon />
                  <LegRoute>
                    <LegLine>
                      Shanghai Hongqiao International Airport, CN
                      <LegArrow />
                    </LegLine>
                    <LegLine>Paris Charles de Gaulle Airport, FR</LegLine>
                  </LegRoute>
                  <button type="button" aria-label="Toggle flight details"><Chevron /></button>
                </Leg>
                <Details>
                  {waybill.map(([label, value]) => (
                    <React.Fragment key={label}>
                      <DetailLabel>{label}</DetailLabel>
                      <dd>{value}</dd>
                    </React.Fragment>
                  ))}
                </Details>
                <Leg>
                  <TruckIcon />
                  <LegRoute>
                    <LegLine>
                      Paris Charles de Gaulle Airport, FR
                      <LegArrow />
                      GRAIN DE MALICE, FR
                    </LegLine>
                  </LegRoute>
                  <button type="button" aria-label="Toggle truck details"><Chevron /></button>
                </Leg>
              </Sheet>
            </Card>

            <Card>
              <ProductSheet>
                <ProductToggle type="button">
                  Product
                  <Chevron size={24} color="#cccccc" />
                </ProductToggle>
                <dl>
                  {product.map(([label, value]) => (
                    <ProductRow key={label}>
                      <ProductLabel>{label}</ProductLabel>
                      <ProductValue>{value}</ProductValue>
                    </ProductRow>
                  ))}
                  <ProductRow $stacked>
                    <ProductLabel>Product description</ProductLabel>
                    <ProductValue>Clothes</ProductValue>
                  </ProductRow>
                </dl>
              </ProductSheet>
            </Card>
          </Cards>
        </Main>
      </Body>
    </Page>
  );
}
